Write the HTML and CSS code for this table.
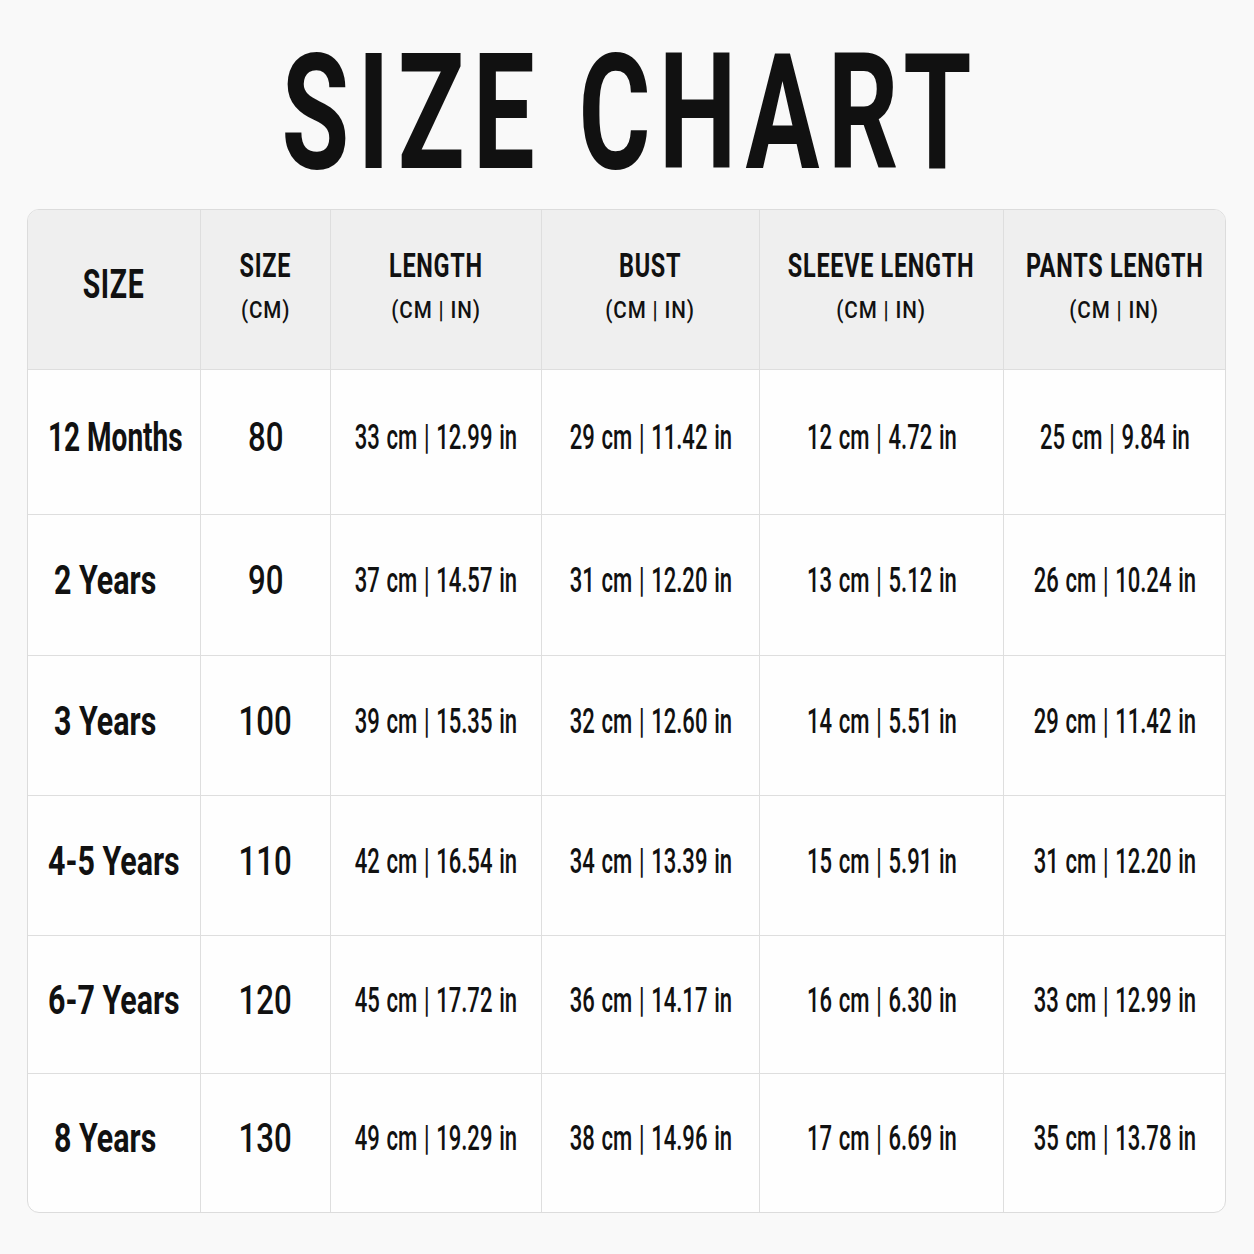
FILE: index.html
```html
<!DOCTYPE html>
<html lang="en">
<head>
<meta charset="utf-8">
<title>Size Chart</title>
<link rel="stylesheet" href="styles.css">
</head>
<body>
<div class="page">
  <h1 class="title"><span class="title-text">SIZE CHART</span></h1>
  <div class="chart">
    <div class="cell head"><span class="h-main h-big">SIZE</span></div>
    <div class="cell head"><span class="h-main">SIZE</span><span class="h-sub">(CM)</span></div>
    <div class="cell head"><span class="h-main">LENGTH</span><span class="h-sub">(CM | IN)</span></div>
    <div class="cell head"><span class="h-main">BUST</span><span class="h-sub">(CM | IN)</span></div>
    <div class="cell head"><span class="h-main">SLEEVE LENGTH</span><span class="h-sub">(CM | IN)</span></div>
    <div class="cell head last-col"><span class="h-main">PANTS LENGTH</span><span class="h-sub">(CM | IN)</span></div>

    <div class="cell label-cell months"><span class="label">12 Months</span></div>
    <div class="cell"><span class="num">80</span></div>
    <div class="cell"><span class="val">33 cm | 12.99 in</span></div>
    <div class="cell"><span class="val">29 cm | 11.42 in</span></div>
    <div class="cell"><span class="val">12 cm | 4.72 in</span></div>
    <div class="cell last-col"><span class="val">25 cm | 9.84 in</span></div>

    <div class="cell label-cell short"><span class="label">2 Years</span></div>
    <div class="cell"><span class="num">90</span></div>
    <div class="cell"><span class="val">37 cm | 14.57 in</span></div>
    <div class="cell"><span class="val">31 cm | 12.20 in</span></div>
    <div class="cell"><span class="val">13 cm | 5.12 in</span></div>
    <div class="cell last-col"><span class="val">26 cm | 10.24 in</span></div>

    <div class="cell label-cell short"><span class="label">3 Years</span></div>
    <div class="cell"><span class="num">100</span></div>
    <div class="cell"><span class="val">39 cm | 15.35 in</span></div>
    <div class="cell"><span class="val">32 cm | 12.60 in</span></div>
    <div class="cell"><span class="val">14 cm | 5.51 in</span></div>
    <div class="cell last-col"><span class="val">29 cm | 11.42 in</span></div>

    <div class="cell label-cell"><span class="label">4-5 Years</span></div>
    <div class="cell"><span class="num">110</span></div>
    <div class="cell"><span class="val">42 cm | 16.54 in</span></div>
    <div class="cell"><span class="val">34 cm | 13.39 in</span></div>
    <div class="cell"><span class="val">15 cm | 5.91 in</span></div>
    <div class="cell last-col"><span class="val">31 cm | 12.20 in</span></div>

    <div class="cell label-cell"><span class="label">6-7 Years</span></div>
    <div class="cell"><span class="num">120</span></div>
    <div class="cell"><span class="val">45 cm | 17.72 in</span></div>
    <div class="cell"><span class="val">36 cm | 14.17 in</span></div>
    <div class="cell"><span class="val">16 cm | 6.30 in</span></div>
    <div class="cell last-col"><span class="val">33 cm | 12.99 in</span></div>

    <div class="cell label-cell short last-row"><span class="label">8 Years</span></div>
    <div class="cell last-row"><span class="num">130</span></div>
    <div class="cell last-row"><span class="val">49 cm | 19.29 in</span></div>
    <div class="cell last-row"><span class="val">38 cm | 14.96 in</span></div>
    <div class="cell last-row"><span class="val">17 cm | 6.69 in</span></div>
    <div class="cell last-row last-col"><span class="val">35 cm | 13.78 in</span></div>
  </div>
</div>
</body>
</html>
```

FILE: styles.css
```css
html, body {
  margin: 0;
  padding: 0;
  background: #f9f9f9;
}

body {
  font-family: Roboto, "Liberation Sans", sans-serif;
  color: #111;
}

.page {
  width: 1254px;
  box-sizing: border-box;
  padding: 32px 28px 0 27px;
  display: flex;
  flex-direction: column;
  gap: 15px;
}

.title {
  margin: 0;
  height: 162px;
  display: flex;
  justify-content: center;
  font-size: 162px;
  line-height: 162px;
  font-weight: 700;
}

.title-text {
  display: inline-block;
  white-space: nowrap;
  letter-spacing: 12px;
  padding-left: 12px;
  transform: scaleX(0.68);
}

.chart {
  display: grid;
  grid-template-columns: 173px 130px 211px 218px 244px 221px;
  grid-template-rows: 160px 145px 141px 140px 140px 138px 138px;
  border: 1px solid #dcdcdc;
  border-radius: 12px;
  overflow: hidden;
  background: #fefefe;
}

.cell {
  display: flex;
  flex-direction: column;
  align-items: center;
  justify-content: center;
  border-right: 1px solid #dedede;
  border-bottom: 1px solid #dedede;
  padding-bottom: 8px;
  box-sizing: border-box;
  min-width: 0;
}

.last-col {
  border-right: none;
}

.last-row {
  border-bottom: none;
}

.head {
  background: #efefef;
  padding-bottom: 10px;
}

.cell span {
  display: inline-block;
  white-space: nowrap;
  flex-shrink: 0;
}

.h-main {
  font-size: 34px;
  line-height: 40px;
  font-weight: 700;
  letter-spacing: 1px;
  transform: scaleX(0.69);
}

.h-big {
  font-size: 40px;
  line-height: 48px;
  transform: scaleX(0.71);
}

.h-sub {
  margin-top: 11px;
  font-size: 24px;
  line-height: 28px;
  font-weight: 500;
  letter-spacing: 1px;
  transform: scaleX(0.86);
}

.label-cell {
  align-items: flex-start;
  padding-left: 20px;
}

.label-cell.short {
  padding-left: 26px;
}

.label {
  font-size: 40px;
  line-height: 48px;
  font-weight: 700;
  transform-origin: left center;
  transform: scaleX(0.76);
}

.months .label {
  transform: scaleX(0.7);
}

.num {
  font-size: 40px;
  line-height: 48px;
  font-weight: 500;
  transform: scaleX(0.78);
}

.val {
  font-size: 35px;
  line-height: 48px;
  font-weight: 500;
  word-spacing: 2px;
  transform: scaleX(0.63);
}
```
